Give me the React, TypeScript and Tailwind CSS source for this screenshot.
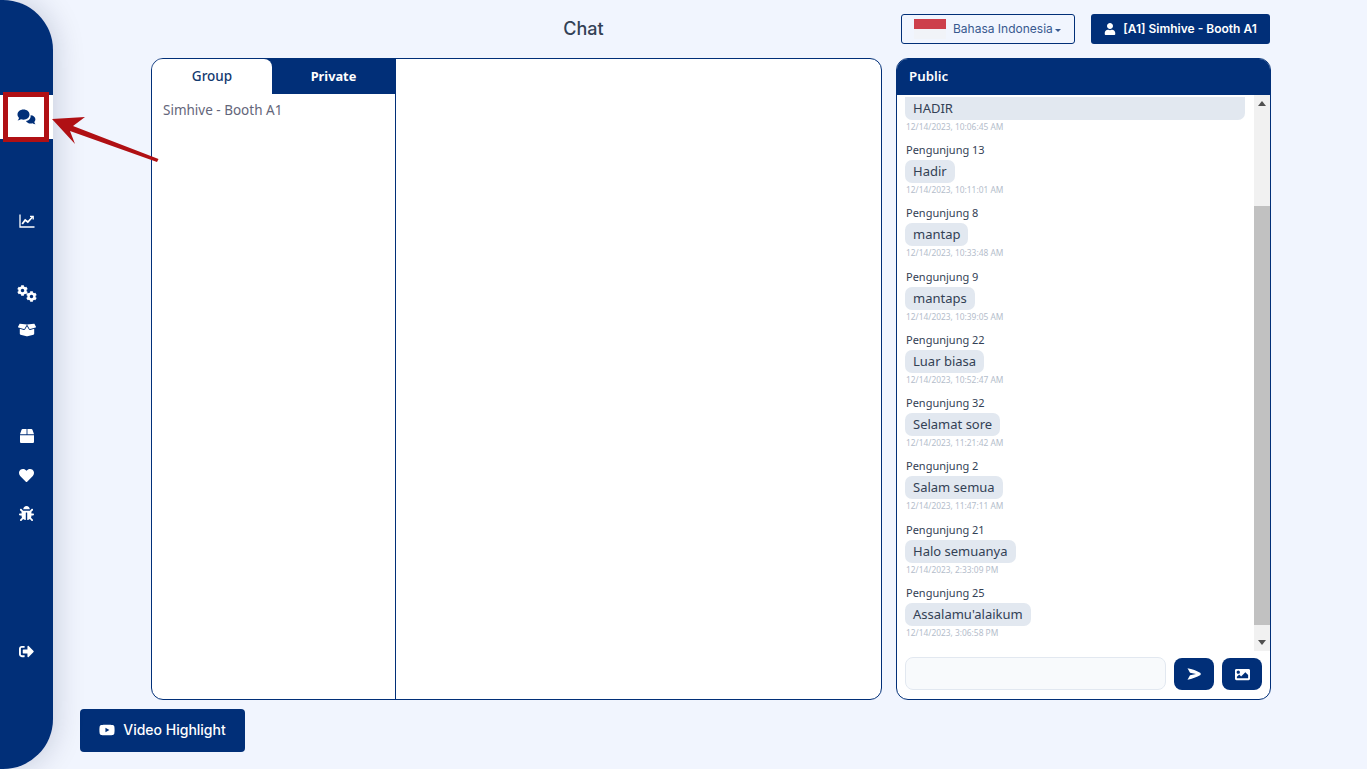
import { FaBox, FaBoxOpen, FaBug, FaCog, FaHeart, FaImage, FaSignOutAlt, FaUser, FaYoutube } from 'react-icons/fa';

const messages = [
  { name: 'Pengunjung 13', text: 'Hadir', time: '12/14/2023, 10:11:01 AM' },
  { name: 'Pengunjung 8', text: 'mantap', time: '12/14/2023, 10:33:48 AM' },
  { name: 'Pengunjung 9', text: 'mantaps', time: '12/14/2023, 10:39:05 AM' },
  { name: 'Pengunjung 22', text: 'Luar biasa', time: '12/14/2023, 10:52:47 AM' },
  { name: 'Pengunjung 32', text: 'Selamat sore', time: '12/14/2023, 11:21:42 AM' },
  { name: 'Pengunjung 2', text: 'Salam semua', time: '12/14/2023, 11:47:11 AM' },
  { name: 'Pengunjung 21', text: 'Halo semuanya', time: '12/14/2023, 2:33:09 PM' },
  { name: 'Pengunjung 25', text: "Assalamu'alaikum", time: '12/14/2023, 3:06:58 PM' },
];

function Sidebar() {
  return (
    <aside className="relative z-10 flex h-[769px] w-[53px] shrink-0 flex-col rounded-r-[50px] bg-[#012f78] pt-[95px] text-[15px] text-white shadow-[0_0_32px_rgba(0,20,60,0.2)]">
      <div className="flex h-[44px] items-center justify-center bg-white text-[#012f78]">
        <svg width="19" height="16" viewBox="0 0 19 16" fill="currentColor">
          <path d="M6.5 0.5 C10 0.5 12.5 2.7 12.5 5.6 C12.5 8.5 10 10.7 6.5 10.7 C5.6 10.7 4.8 10.6 4 10.3 C3 11 1.8 11.4 0.6 11.4 C1.4 10.6 1.9 9.8 2 8.9 C1 8 0.5 6.9 0.5 5.6 C0.5 2.7 3 0.5 6.5 0.5 Z" />
          <path d="M13.6 6.2 C16.3 6.2 18.4 8 18.4 10.3 C18.4 11.3 18 12.2 17.3 12.9 C17.4 13.7 17.8 14.5 18.5 15.2 C17.4 15.2 16.4 14.9 15.5 14.3 C14.9 14.5 14.3 14.6 13.6 14.6 C11.5 14.6 9.7 13.5 9 12 C11.8 11.7 14 9.4 13.6 6.2 Z" />
        </svg>
      </div>
      <div className="mt-[64px] flex h-[36px] items-center justify-center">
        <svg width="16" height="14" viewBox="0 0 16 14" fill="none" stroke="currentColor">
          <path d="M1 0.5 V13 H15.5" strokeWidth="1.3" />
          <path d="M3.2 10 L6.2 6 L8.8 8 L13.5 3" strokeWidth="1.8" />
          <path d="M11 2.3 H14.2 V5.5" strokeWidth="1.3" />
        </svg>
      </div>
      <div className="mt-[36px] flex h-[36px] items-center justify-center text-[11px]">
        <FaCog className="mb-[6px]" />
        <FaCog className="-ml-[2px] mt-[6px]" />
      </div>
      <div className="mt-[1px] flex h-[36px] items-center justify-center text-[18px]">
        <FaBoxOpen />
      </div>
      <div className="mt-[70px] flex h-[36px] items-center justify-center text-[14px]">
        <FaBox />
      </div>
      <div className="mt-[3px] flex h-[36px] items-center justify-center">
        <FaHeart />
      </div>
      <div className="mt-[2px] flex h-[36px] items-center justify-center">
        <FaBug />
      </div>
      <div className="mt-[102px] flex h-[36px] items-center justify-center">
        <FaSignOutAlt />
      </div>
    </aside>
  );
}

function Message({ name, text, time }: { name: string; text: string; time: string }) {
  return (
    <div className="mb-[7.25px] flex flex-col items-start">
      <div className="h-[19px] pl-[1px] text-[11px] leading-[17px] text-[#334155]">{name}</div>
      <div className="h-[23px] rounded-[7px] bg-[#e2e8f0] px-[8px] text-[13px] leading-[23px] text-[#334155]">{text}</div>
      <div className="h-[14px] pl-[1px] text-[8.4px] leading-[14px] text-[#b4bdcb]">{time}</div>
    </div>
  );
}

function PublicPanel() {
  return (
    <section className="flex h-[642px] w-[375px] flex-col overflow-hidden rounded-xl border border-[#012f78] bg-white">
      <div className="flex h-[36px] shrink-0 items-center bg-[#012f78] px-[12px] text-[13.3px] font-semibold text-white">Public</div>
      <div className="flex h-[556px] shrink-0">
        <div className="flex min-w-0 flex-1 flex-col justify-end overflow-hidden pl-[8px] pr-[9px] pb-[4px]">
          <div className="mb-[7.25px] flex flex-col">
            <div className="h-[23px] rounded-b-[7px] bg-[#e2e8f0] px-[8px] text-[13px] leading-[23px] text-[#334155]">HADIR</div>
            <div className="h-[14px] pl-[1px] text-[8.4px] leading-[14px] text-[#b4bdcb]">12/14/2023, 10:06:45 AM</div>
          </div>
          {messages.map((m) => (
            <Message key={m.name} name={m.name} text={m.text} time={m.time} />
          ))}
        </div>
        <div className="flex w-[16px] shrink-0 flex-col bg-[#f1f1f1]">
          <div className="flex h-[17px] items-center justify-center">
            <div className="h-0 w-0 border-x-[4px] border-b-[5px] border-x-transparent border-b-[#505050]" />
          </div>
          <div className="mt-[94px] mb-[9px] h-[419px] bg-[#c1c1c1]" />
          <div className="flex h-[17px] items-center justify-center">
            <div className="h-0 w-0 border-x-[4px] border-t-[5px] border-x-transparent border-t-[#505050]" />
          </div>
        </div>
      </div>
      <div className="flex flex-1 items-start gap-[8px] pl-[8px] pt-[6px]">
        <input className="h-[33px] w-[261px] rounded-lg border border-[#e2e8f0] bg-[#f8fafc]" />
        <button className="mt-[1px] flex h-[32px] w-[40px] items-center justify-center rounded-lg bg-[#012f78] text-white">
          <svg width="14" height="12" viewBox="0 0 14 12" fill="currentColor">
            <path d="M0.5 0.3 C5 1 10 3 13.5 5 Q14 6 13.5 7 C10 9 5 11 0.5 11.7 L3 7.2 L9 6 L3 4.8 Z" />
          </svg>
        </button>
        <button className="mt-[1px] flex h-[32px] w-[40px] items-center justify-center rounded-lg bg-[#012f78] text-[15px] text-white">
          <FaImage />
        </button>
      </div>
    </section>
  );
}

export default function App() {
  return (
    <div className="relative flex h-[769px] w-full overflow-hidden bg-[#f1f5fe] font-['Inter',sans-serif]">
      <Sidebar />
      <main className="flex min-w-0 flex-1 flex-col pt-[14px] pl-[27px]">
        <header className="ml-[71px] flex h-[30px] w-[1119px] items-center">
          <h1 className="flex-1 pb-[2px] pl-[115px] text-center text-[18px] font-medium text-[#334155]">Chat</h1>
          <div className="flex items-center gap-[16px]">
            <button className="relative flex h-[30px] w-[174px] items-center rounded-[3px] border border-[#012f78] pl-[51px] text-[12px] text-[#38598f]">
              <span className="absolute left-[12px] top-[4px] flex w-[32px] flex-col">
                <span className="h-[10px] bg-[#cd3f4b]" />
                <span className="h-[10px] bg-[#f1f3f8]" />
              </span>
              Bahasa Indonesia
              <span className="ml-[2px] mt-[2px] h-0 w-0 border-x-[3px] border-t-[3px] border-x-transparent border-t-[#38598f]" />
            </button>
            <button className="flex h-[30px] w-[179px] items-center justify-center gap-[7px] rounded-[3px] bg-[#012f78] text-[12px] font-semibold text-white">
              <FaUser className="text-[12px]" />
              [A1] Simhive - Booth A1
            </button>
          </div>
        </header>
        <div className="ml-[71px] mt-[14px] flex items-start gap-[14px] font-['Noto_Sans',sans-serif]">
          <section className="flex h-[642px] w-[731px] overflow-hidden rounded-xl border border-[#012f78] bg-white">
            <div className="w-[244px] shrink-0 border-r border-[#012f78]">
              <div className="flex h-[35px] bg-[#012f78]">
                <button className="w-[120px] rounded-tr-lg bg-white text-[13.5px] font-medium text-[#12396f]">Group</button>
                <button className="flex-1 text-[12.8px] font-bold text-white">Private</button>
              </div>
              <div className="px-[11px] pt-[6px] text-[13.5px] text-[#64667a]">Simhive - Booth A1</div>
            </div>
            <div className="flex-1" />
          </section>
          <PublicPanel />
        </div>
        <button className="mt-[9px] flex h-[43px] w-[165px] items-center justify-center gap-[8px] rounded-[4px] bg-[#012f78] pb-[2px] text-[14px] font-medium text-white">
          <FaYoutube className="text-[16px]" />
          Video Highlight
        </button>
      </main>

      {/* annotation over the screenshot */}
      <div className="absolute left-[3px] top-[92px] z-20 h-[50px] w-[46px] border-[5px] border-[#b01014]" />
      <svg className="absolute left-0 top-0 z-20" width="170" height="170" viewBox="0 0 170 170" fill="#b01014">
        <path d="M52 119 L85 117 L73 126 L158.5 159 L157 162 L70 131 L75 144 Z" />
      </svg>
    </div>
  );
}
